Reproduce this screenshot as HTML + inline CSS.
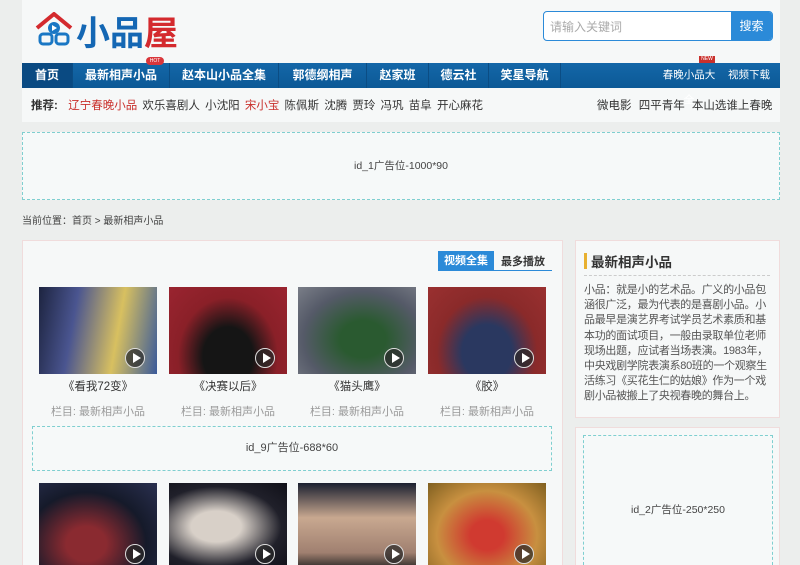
<!DOCTYPE html>
<html><head><meta charset="utf-8"><style>
*{margin:0;padding:0;box-sizing:border-box}
html,body{width:800px;height:565px;overflow:hidden}
body{background:#eceeed;font-family:"Liberation Sans","Noto Sans CJK SC",sans-serif;font-size:12px;color:#333;position:relative}
.abs{position:absolute}
.hdr{left:22px;top:0;width:758px;height:122px;background:#f6f8f8}
.logo{left:76px;top:9px;font-size:34px;font-weight:bold;letter-spacing:0px;font-family:"Noto Sans CJK SC",sans-serif;line-height:44px}
.search{left:543px;top:11px;width:230px;height:30px;border:1px solid #2b8ad8;border-radius:4px;background:#fff;overflow:hidden}
.search span{position:absolute;left:6px;top:6px;color:#aaa;font-size:12px}
.search b{position:absolute;right:0;top:0;width:41px;height:28px;background:#2b8ad8;color:#fff;font-weight:normal;font-size:12px;text-align:center;line-height:28px}
.nav{left:22px;top:63px;width:758px;height:25px;background:linear-gradient(#1467a8,#0c5996);color:#fff;font-size:12px;font-weight:bold}
.nav div{position:absolute;top:0;height:25px;line-height:25px;text-align:center;border-right:1px solid #0b4d84}
.nav .r{font-weight:normal;font-size:10.5px;border:none}
.rec{left:31px;top:97px;font-size:11.5px;color:#333;word-spacing:2px}
.rec i{font-style:normal;color:#c9302c}
.ad{border:1px dashed #7fcfd0;background:#f6f9f9;text-align:center;color:#444}
.bread{left:22px;top:212px;font-size:10px;color:#444}
.main{left:22px;top:240px;width:541px;height:330px;background:#f6f8f8;border:1px solid #f0dcdc}
.side{left:575px;top:240px;width:205px;height:178px;background:#f6f8f8;border:1px solid #f0dcdc}
.side2{left:575px;top:427px;width:205px;height:140px;background:#f6f8f8;border:1px solid #f0dcdc}
.th{width:118px;height:87px;overflow:hidden}
.th:after{content:"";position:absolute;right:12px;bottom:6px;width:18px;height:18px;border-radius:50%;background:rgba(40,40,40,.7);border:1.5px solid #ddd}
.th:before{content:"";position:absolute;right:16px;bottom:11px;border-left:8px solid #fff;border-top:5px solid transparent;border-bottom:5px solid transparent;z-index:2}
.tt{width:118px;text-align:center;font-size:11.5px;color:#333}
.tc{width:118px;text-align:center;font-size:11px;color:#999}
</style></head><body>
<div class="abs hdr"></div>
<svg class="abs" style="left:35px;top:12px" width="38" height="34" viewBox="0 0 38 34">
<path d="M2 16 L19 2 L36 16" fill="none" stroke="#d42a2e" stroke-width="4" stroke-linejoin="round"/>
<circle cx="19" cy="16" r="6" fill="#1a77c4"/><path d="M17 13 L22 16 L17 19Z" fill="#fff"/>
<rect x="5" y="22" width="12" height="10" rx="3" fill="none" stroke="#1a77c4" stroke-width="3"/>
<rect x="21" y="22" width="12" height="10" rx="3" fill="none" stroke="#1a77c4" stroke-width="3"/>
</svg>
<div class="abs logo"><span style="color:#1467b4">小品</span><span style="color:#d42a2e">屋</span></div>
<div class="abs search"><span>请输入关键词</span><b>搜索</b></div>
<div class="abs nav">
<div style="left:0;width:51px;background:#0a4a82">首页</div>
<div style="left:51px;width:97px">最新相声小品</div>
<div style="left:148px;width:109px">赵本山小品全集</div>
<div style="left:257px;width:88px">郭德纲相声</div>
<div style="left:345px;width:62px">赵家班</div>
<div style="left:407px;width:60px">德云社</div>
<div style="left:467px;width:72px">笑星导航</div>
<div class="r" style="left:637px;width:60px">春晚小品大全</div>
<div class="r" style="left:704px;width:46px">视频下载</div>
</div>
<div class="abs" style="left:146px;top:57px;width:18px;height:8px;background:#d9363a;border-radius:4px;color:#fff;font-size:5px;text-align:center;line-height:8px">HOT</div>
<div class="abs" style="left:699px;top:56px;width:16px;height:7px;background:#c9302c;color:#fff;font-size:5px;text-align:center;line-height:7px">NEW</div>
<div class="abs rec"><b style="color:#333">推荐:</b> &nbsp;<i>辽宁春晚小品</i> 欢乐喜剧人 小沈阳 <i>宋小宝</i> 陈佩斯 沈腾 贾玲 冯巩 苗阜 开心麻花</div>
<div class="abs rec" style="left:597px;word-spacing:4px">微电影 四平青年 本山选谁上春晚</div>
<div class="abs ad" style="left:22px;top:132px;width:758px;height:68px;line-height:66px;font-size:10.5px">id_1广告位-1000*90</div>
<div class="abs bread">当前位置：首页 &gt; 最新相声小品</div>
<div class="abs main"></div>
<div class="abs" style="left:438px;top:251px;width:56px;height:20px;background:#2b8ad8;color:#fff;font-weight:bold;font-size:11px;text-align:center;line-height:20px">视频全集</div>
<div class="abs" style="left:494px;top:251px;width:58px;height:20px;border-bottom:1px solid #2b8ad8;color:#333;font-weight:bold;font-size:11px;text-align:center;line-height:22px">最多播放</div>
<div class="abs th" style="left:39px;top:287px;background:linear-gradient(100deg,#1d2440 0%,#4a5590 30%,#d8c060 65%,#3a5a9a 100%)"></div>
<div class="abs th" style="left:169px;top:287px;background:radial-gradient(ellipse at 50% 80%,#151515 30%,#8a2028 60%,#9a2430 100%)"></div>
<div class="abs th" style="left:298px;top:287px;background:radial-gradient(ellipse at 55% 60%,#2a5a30 25%,#555a68 65%,#7a7e88 100%)"></div>
<div class="abs th" style="left:428px;top:287px;background:radial-gradient(ellipse at 50% 75%,#2a3860 30%,#8a2a2a 60%,#9a3030 100%)"></div>
<div class="abs tt" style="left:39px;top:378px">《看我72变》</div>
<div class="abs tt" style="left:169px;top:378px">《决赛以后》</div>
<div class="abs tt" style="left:298px;top:378px">《猫头鹰》</div>
<div class="abs tt" style="left:428px;top:378px">《胶》</div>
<div class="abs tc" style="left:39px;top:403px">栏目: 最新相声小品</div>
<div class="abs tc" style="left:169px;top:403px">栏目: 最新相声小品</div>
<div class="abs tc" style="left:298px;top:403px">栏目: 最新相声小品</div>
<div class="abs tc" style="left:428px;top:403px">栏目: 最新相声小品</div>
<div class="abs ad" style="left:32px;top:426px;width:520px;height:45px;line-height:43px;font-size:11px">id_9广告位-688*60</div>
<div class="abs th" style="left:39px;top:483px;background:radial-gradient(ellipse at 40% 70%,#8a2a30 20%,#151a2a 60%,#2a3050 100%)"></div>
<div class="abs th" style="left:169px;top:483px;background:radial-gradient(ellipse at 40% 50%,#d8d0c8 25%,#20202a 65%,#101018 100%)"></div>
<div class="abs th" style="left:298px;top:483px;background:linear-gradient(#1a2030 0%,#c8a890 40%,#a08070 80%,#202020 100%)"></div>
<div class="abs th" style="left:428px;top:483px;background:radial-gradient(ellipse at 50% 60%,#d03a30 20%,#c89040 60%,#806020 100%)"></div>
<div class="abs side"></div>
<div class="abs" style="left:584px;top:253px;width:3px;height:16px;background:#e8b030"></div>
<div class="abs" style="left:591px;top:251px;font-size:13.5px;font-weight:bold;color:#333">最新相声小品</div>
<div class="abs" style="left:584px;top:275px;width:186px;border-top:1px dashed #ccc"></div>
<div class="abs" style="left:584px;top:283px;width:190px;height:130px;overflow:hidden;font-size:11px;line-height:15.2px;letter-spacing:-0.3px;color:#555">小品：就是小的艺术品。广义的小品包涵很广泛，最为代表的是喜剧小品。小品最早是演艺界考试学员艺术素质和基本功的面试项目，一般由录取单位老师现场出题，应试者当场表演。1983年，中央戏剧学院表演系80班的一个观察生活练习《买花生仁的姑娘》作为一个戏剧小品被搬上了央视春晚的舞台上。</div>
<div class="abs side2"></div>
<div class="abs ad" style="left:583px;top:435px;width:190px;height:130px;padding-top:66px;font-size:10.5px;border-bottom:none">id_2广告位-250*250</div>
</body></html>
